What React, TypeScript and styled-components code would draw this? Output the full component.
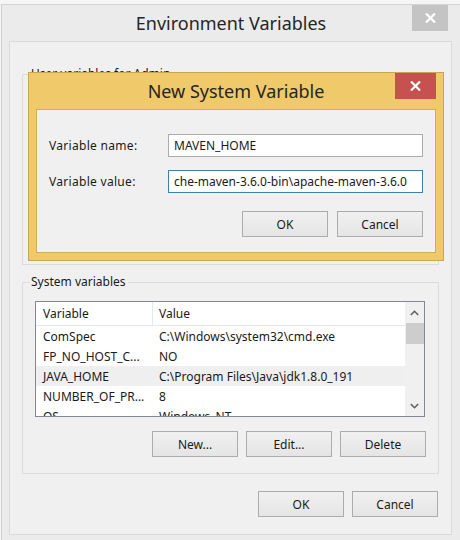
import React from "react";
import styled, { createGlobalStyle } from "styled-components";

const GlobalStyle = createGlobalStyle`
  html, body { margin: 0; padding: 0; background: #f5f5f5; }
  body { font-family: "Noto Sans", "Open Sans", sans-serif; color: #1a1a1a; }
  #root { width: 460px; height: 540px; overflow: hidden; }
  * { box-sizing: border-box; }
`;

const Screen = styled.div`
  position: relative;
  width: 460px;
  height: 540px;
  overflow: hidden;
  padding: 4px 0 0 1px;
  background: #f5f5f5;
`;

const Window = styled.div`
  height: 100%;
  display: flex;
  flex-direction: column;
  background: #ebebeb;
  border-left: 1px solid #d2d2d2;
  border-top: 1px solid #d4d4d4;
`;

const TitleBar = styled.div`
  height: 36px;
  flex: none;
  display: grid;
  grid-template-columns: 1fr auto 1fr;
  align-items: center;
`;

const Title = styled.div<{ $size: number }>`
  grid-column: 2;
  font-family: "Noto Sans", sans-serif;
  font-size: ${(p) => p.$size}px;
  color: #262626;
  white-space: nowrap;
`;

const CloseButton = styled.div<{ $bg: string; $w: number; $h: number; $mr: number }>`
  grid-column: 3;
  justify-self: end;
  align-self: start;
  width: ${(p) => p.$w}px;
  height: ${(p) => p.$h}px;
  margin-right: ${(p) => p.$mr}px;
  background: ${(p) => p.$bg};
  display: flex;
  align-items: center;
  justify-content: center;
`;

const Panel = styled.div`
  flex: 1;
  margin: 0 8px 5px 7px;
  border: 1px solid #dadada;
  background: #f0f0f0;
  padding: 24px 12px 0 12px;
  display: flex;
  flex-direction: column;
`;

const Group = styled.fieldset<{ $height?: number; $mt?: number }>`
  margin: ${(p) => p.$mt ?? 0}px 0 0 0;
  padding: 0 13px 16px 12px;
  border: 1px solid #dcdcdc;
  ${(p) => (p.$height ? `height: ${p.$height}px;` : "")}
`;

const Legend = styled.legend`
  font-size: 12px;
  line-height: 16px;
  padding: 0 2px 0 1px;
  margin-left: -5px;
  color: #1a1a1a;
  white-space: nowrap;
`;

const ListBox = styled.div`
  margin-top: 11px;
  height: 116px;
  border: 1px solid #828790;
  background: #ffffff;
  display: flex;
  overflow: hidden;
`;

const Table = styled.div`
  flex: 1;
  display: flex;
  flex-direction: column;
  overflow: hidden;
`;

const HeaderRow = styled.div`
  flex: none;
  height: 24px;
  display: grid;
  grid-template-columns: 116px 1fr;
  border-bottom: 1px solid #e3e8ee;
  font-size: 12px;
`;

const HeaderCell = styled.div<{ $divider?: boolean }>`
  display: flex;
  align-items: center;
  padding-left: ${(p) => (p.$divider ? 6 : 7)}px;
  ${(p) => (p.$divider ? "border-left: 1px solid #e3e8ee;" : "")}
`;

const Row = styled.div<{ $selected?: boolean }>`
  flex: none;
  height: 20px;
  display: grid;
  grid-template-columns: 116px 1fr;
  background: ${(p) => (p.$selected ? "#efefef" : "transparent")};
  font-size: 12px;
`;

const Cell = styled.div`
  display: flex;
  align-items: center;
  padding-left: 7px;
  white-space: nowrap;
  overflow: hidden;
`;

const ScrollBar = styled.div`
  flex: none;
  width: 19px;
  background: #f0f0f0;
  display: flex;
  flex-direction: column;
  align-items: stretch;
`;

const ScrollArrow = styled.div`
  height: 21px;
  display: flex;
  align-items: center;
  justify-content: center;
`;

const Thumb = styled.div`
  height: 21px;
  margin: 0 0 0 1px;
  background: #cdcdcd;
`;

const Track = styled.div`
  flex: 1;
`;

const ButtonRow = styled.div<{ $mt: number; $mr: number; $gap: number }>`
  margin-top: ${(p) => p.$mt}px;
  margin-right: ${(p) => p.$mr}px;
  display: flex;
  justify-content: flex-end;
  gap: ${(p) => p.$gap}px;
`;

const Button = styled.div`
  width: 86px;
  height: 26px;
  border: 1px solid #acacac;
  background: linear-gradient(#f0f0f0, #e5e5e5);
  font-size: 12px;
  display: flex;
  align-items: center;
  justify-content: center;
  color: #1a1a1a;
`;

const Dialog = styled.div`
  position: absolute;
  left: 28px;
  top: 72px;
  width: 416px;
  height: 189px;
  background: #f0c96a;
  border: 1px solid #c9a752;
  display: flex;
  flex-direction: column;
  padding: 0 7px 7px 7px;
`;

const DialogBody = styled.div`
  flex: 1;
  background: #f0f0f0;
  border: 1px solid #d2ae55;
  padding: 24px 12px 0 12px;
  display: flex;
  flex-direction: column;
`;

const FieldRow = styled.div<{ $mt?: number }>`
  display: grid;
  grid-template-columns: 119px 1fr;
  align-items: center;
  margin-top: ${(p) => p.$mt ?? 0}px;
  font-size: 12px;
`;

const FieldLabel = styled.span`
  letter-spacing: 0.3px;
`;

const TextBox = styled.div<{ $focused?: boolean }>`
  height: 23px;
  border: 1px solid ${(p) => (p.$focused ? "#3c7fb1" : "#ababab")};
  background: #ffffff;
  padding: 0 4px 0 5px;
  display: flex;
  align-items: center;
  white-space: nowrap;
  overflow: hidden;
`;

const XIcon = ({ size }: { size: number }) => (
  <svg width={size} height={size - 1} viewBox="0 0 11 10">
    <path d="M1 0.5 L10 9.5 M10 0.5 L1 9.5" stroke="#ffffff" strokeWidth="2.2" fill="none" />
  </svg>
);

const Chevron = ({ up }: { up: boolean }) => (
  <svg width="9" height="6" viewBox="0 0 9 6">
    <path
      d={up ? "M0.8 5 L4.5 1.3 L8.2 5" : "M0.8 1 L4.5 4.7 L8.2 1"}
      stroke="#606060"
      strokeWidth="1.6"
      fill="none"
    />
  </svg>
);

const rows: [string, string][] = [
  ["ComSpec", "C:\\Windows\\system32\\cmd.exe"],
  ["FP_NO_HOST_C...", "NO"],
  ["JAVA_HOME", "C:\\Program Files\\Java\\jdk1.8.0_191"],
  ["NUMBER_OF_PR...", "8"],
  ["OS", "Windows_NT"],
];

export default function App() {
  return (
    <>
      <GlobalStyle />
      <Screen>
        <Window>
          <TitleBar>
            <Title $size={18}>Environment Variables</Title>
            <CloseButton $bg="#c4c4c4" $w={36} $h={26} $mr={12}>
              <XIcon size={11} />
            </CloseButton>
          </TitleBar>
          <Panel>
            <Group $height={199}>
              <Legend>User variables for Admin</Legend>
            </Group>
            <Group $mt={9}>
              <Legend>System variables</Legend>
              <ListBox>
                <Table>
                  <HeaderRow>
                    <HeaderCell>Variable</HeaderCell>
                    <HeaderCell $divider>Value</HeaderCell>
                  </HeaderRow>
                  {rows.map(([k, v]) => (
                    <Row key={k} $selected={k === "JAVA_HOME"}>
                      <Cell>{k}</Cell>
                      <Cell>{v}</Cell>
                    </Row>
                  ))}
                </Table>
                <ScrollBar>
                  <ScrollArrow>
                    <Chevron up />
                  </ScrollArrow>
                  <Thumb />
                  <Track />
                  <ScrollArrow>
                    <Chevron up={false} />
                  </ScrollArrow>
                </ScrollBar>
              </ListBox>
              <ButtonRow $mt={14} $mr={-1} $gap={8}>
                <Button>New...</Button>
                <Button>Edit...</Button>
                <Button>Delete</Button>
              </ButtonRow>
            </Group>
            <ButtonRow $mt={17} $mr={1} $gap={8}>
              <Button>OK</Button>
              <Button>Cancel</Button>
            </ButtonRow>
          </Panel>
        </Window>
        <Dialog>
          <TitleBar>
            <Title $size={18}>New System Variable</Title>
            <CloseButton $bg="#c75050" $w={41} $h={26} $mr={0}>
              <XIcon size={11} />
            </CloseButton>
          </TitleBar>
          <DialogBody>
            <FieldRow>
              <FieldLabel>Variable name:</FieldLabel>
              <TextBox>MAVEN_HOME</TextBox>
            </FieldRow>
            <FieldRow $mt={13}>
              <FieldLabel>Variable value:</FieldLabel>
              <TextBox $focused>che-maven-3.6.0-bin\apache-maven-3.6.0</TextBox>
            </FieldRow>
            <ButtonRow $mt={18} $mr={0} $gap={9}>
              <Button>OK</Button>
              <Button>Cancel</Button>
            </ButtonRow>
          </DialogBody>
        </Dialog>
      </Screen>
    </>
  );
}
